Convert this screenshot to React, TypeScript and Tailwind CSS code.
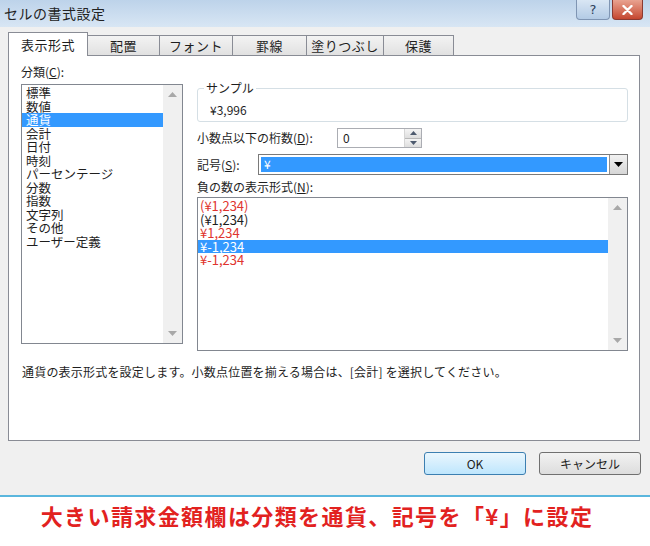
const categories = [
  "標準",
  "数値",
  "通貨",
  "会計",
  "日付",
  "時刻",
  "パーセンテージ",
  "分数",
  "指数",
  "文字列",
  "その他",
  "ユーザー定義",
];

const negatives = [
  { text: "(¥1,234)", red: true, selected: false },
  { text: "(¥1,234)", red: false, selected: false },
  { text: "¥1,234", red: true, selected: false },
  { text: "¥-1,234", red: false, selected: true },
  { text: "¥-1,234", red: true, selected: false },
];

const tabs = [
  { label: "表示形式", w: "w-[80px]" },
  { label: "配置", w: "w-[73px]" },
  { label: "フォント", w: "w-[74px]" },
  { label: "罫線", w: "w-[75px]" },
  { label: "塗りつぶし", w: "w-[78px]" },
  { label: "保護", w: "w-[71px]" },
];

// Vertical scrollbar with disabled-looking arrows
const ScrollBar = () => (
  <div className="w-[19px] h-full bg-[#f0f0f0] flex flex-col items-center justify-between py-[7px]">
    <svg width="9" height="5" viewBox="0 0 9 5">
      <path d="M0 5 L4.5 0 L9 5 Z" fill="#a8a8a8" />
    </svg>
    <svg width="9" height="5" viewBox="0 0 9 5">
      <path d="M0 0 L4.5 5 L9 0 Z" fill="#a8a8a8" />
    </svg>
  </div>
);

export default function App() {
  return (
    <div className="w-[650px] h-[546px] bg-white flex flex-col font-['Noto_Sans_CJK_JP',sans-serif] text-[12px] text-[#1e1e1e]">
      {/* Dialog */}
      <div className="h-[497px] bg-[#f0f0f0] border-b-2 border-[#5ab6dd] flex flex-col">
        {/* Title bar */}
        <div className="h-[27px] flex items-start bg-gradient-to-b from-[#bdd3ea] to-[#d8e6f4]">
          <span className="ml-[4px] mt-[5px] text-[14px] leading-[16px] tracking-[0.5px] text-[#222]">セルの書式設定</span>
          <div className="ml-auto flex gap-[2px] mr-[7px]">
            <div className="w-[34px] h-[20px] rounded-b-[4px] border border-t-0 border-[#7f95b3] bg-gradient-to-b from-[#d9e6f4] to-[#b3cbe5] flex items-center justify-center text-[13px] leading-none text-[#2c3e5a] font-['DejaVu_Sans',sans-serif]">
              ?
            </div>
            <div className="w-[31px] h-[20px] rounded-b-[4px] border border-t-0 border-[#8a3a32] bg-gradient-to-b from-[#e8a290] to-[#c4452f] flex items-center justify-center">
              <svg width="11" height="10" viewBox="0 0 11 10">
                <path d="M1.5 1 L9.5 9 M9.5 1 L1.5 9" stroke="#fff" strokeWidth="2.4" strokeLinecap="round" />
              </svg>
            </div>
          </div>
        </div>

        {/* Body */}
        <div className="flex-1 px-[8px] pt-[5px] flex flex-col">
          {/* Tabs */}
          <div className="flex items-end h-[23px] relative z-10">
            {tabs.map((t, i) =>
              i === 0 ? (
                <div
                  key={t.label}
                  className={`${t.w} h-[24px] -mb-px bg-white border border-b-0 border-[#898c95] flex items-center justify-center text-[13px] leading-[15px] tracking-[0.5px]`}
                >
                  {t.label}
                </div>
              ) : (
                <div
                  key={t.label}
                  className={`${t.w} h-[20px] -ml-px bg-gradient-to-b from-[#f3f3f3] to-[#e1e1e1] border border-b-0 border-[#898c95] flex items-center justify-center text-[13px] leading-[15px] tracking-[0.5px]`}
                >
                  {t.label}
                </div>
              )
            )}
          </div>

          {/* Panel */}
          <div className="w-[632px] h-[386px] bg-white border border-[#898c95] pl-[12px] pt-[9px] flex flex-col">
            <div className="flex">
              {/* Left: category */}
              <div className="w-[162px] flex flex-col">
                <div className="h-[14px] leading-[14px]">
                  分類(<span className="underline">C</span>):
                </div>
                <div className="mt-[5px] h-[260px] border border-[#828790] flex">
                  <div className="flex-1 pt-[1px] flex flex-col">
                    {categories.map((c, i) => (
                      <div
                        key={c}
                        className={`h-[13.5px] leading-[13.5px] pl-[4px] text-[12.5px] ${
                          i === 2 ? "bg-[#3399ff] text-white" : ""
                        }`}
                      >
                        {c}
                      </div>
                    ))}
                  </div>
                  <ScrollBar />
                </div>
              </div>

              {/* Right: options */}
              <div className="ml-[14px] w-[431px] flex flex-col">
                {/* Sample group */}
                <div className="relative mt-[23px] h-[34px] border border-[#d5dfe5] rounded-[3px]">
                  <span className="absolute -top-[8px] left-[6px] px-[2px] bg-white leading-[14px]">サンプル</span>
                  <div className="pl-[12px] pt-[14px] leading-[14px]">¥3,996</div>
                </div>

                {/* Decimal places */}
                <div className="mt-[6px] flex items-center h-[20px]">
                  <span className="w-[140px] leading-[14px]">
                    小数点以下の桁数(<span className="underline">D</span>):
                  </span>
                  <div className="w-[85px] h-[20px] border border-[#abadb3] flex">
                    <div className="flex-1 pl-[5px] leading-[18px]">0</div>
                    <div className="w-[17px] flex flex-col border-l border-[#d5d5d5]">
                      <div className="flex-1 bg-gradient-to-b from-[#f4f4f4] to-[#dedede] border-b border-[#b8b8b8] flex items-center justify-center">
                        <svg width="7" height="4" viewBox="0 0 7 4">
                          <path d="M0 4 L3.5 0 L7 4 Z" fill="#4d5a6e" />
                        </svg>
                      </div>
                      <div className="flex-1 bg-gradient-to-b from-[#f4f4f4] to-[#dedede] flex items-center justify-center">
                        <svg width="7" height="4" viewBox="0 0 7 4">
                          <path d="M0 0 L3.5 4 L7 0 Z" fill="#4d5a6e" />
                        </svg>
                      </div>
                    </div>
                  </div>
                </div>

                {/* Symbol */}
                <div className="mt-[6px] flex items-center h-[21px]">
                  <span className="w-[61px] leading-[14px]">
                    記号(<span className="underline">S</span>):
                  </span>
                  <div className="flex-1 h-[21px] border border-[#7a7a7a] flex">
                    <div className="flex-1 border-2 border-white">
                      <div className="h-full bg-[#3399ff] text-white pl-[3px] leading-[13px]">¥</div>
                    </div>
                    <div className="w-[18px] bg-gradient-to-b from-[#f2f2f2] to-[#d6d6d6] border-l border-[#8d8d8d] flex items-center justify-center">
                      <svg width="9" height="5" viewBox="0 0 9 5">
                        <path d="M0 0 L4.5 5 L9 0 Z" fill="#000" />
                      </svg>
                    </div>
                  </div>
                </div>

                {/* Negative format */}
                <div className="mt-[5px] h-[14px] leading-[14px]">
                  負の数の表示形式(<span className="underline">N</span>):
                </div>
                <div className="mt-[3px] h-[154px] border border-[#828790] flex">
                  <div className="flex-1 pt-[1px] flex flex-col">
                    {negatives.map((n, i) => (
                      <div
                        key={i}
                        className={`h-[13.6px] leading-[13.6px] pl-[2px] text-[13px] ${
                          n.selected ? "bg-[#3399ff] text-white" : n.red ? "text-[#e0342e]" : "text-[#1e1e1e]"
                        }`}
                      >
                        {n.text}
                      </div>
                    ))}
                  </div>
                  <ScrollBar />
                </div>
              </div>
            </div>

            {/* Description */}
            <div className="mt-[14px] leading-[14px] pl-[1px] tracking-[0.2px]">
              通貨の表示形式を設定します。小数点位置を揃える場合は、[会計] を選択してください。
            </div>
          </div>

          {/* Buttons */}
          <div className="mt-[11px] flex justify-end gap-[13px] pr-[1px]">
            <button className="w-[102px] h-[23px] rounded-[3px] border border-[#3c7fb1] bg-gradient-to-b from-[#eaf6fd] to-[#bee6fd] text-[12px] leading-none">
              OK
            </button>
            <button className="w-[102px] h-[23px] rounded-[3px] border border-[#707070] bg-gradient-to-b from-[#f2f2f2] to-[#dddddd] text-[12px] leading-none">
              キャンセル
            </button>
          </div>
        </div>
      </div>

      {/* Caption */}
      <div className="flex-1 flex justify-center pt-[4px] pr-[16px]">
        <span className="text-[22px] leading-[28px] font-bold tracking-[1.4px] text-[#e2221f]">
          大きい請求金額欄は分類を通貨、記号を「¥」に設定
        </span>
      </div>
    </div>
  );
}
